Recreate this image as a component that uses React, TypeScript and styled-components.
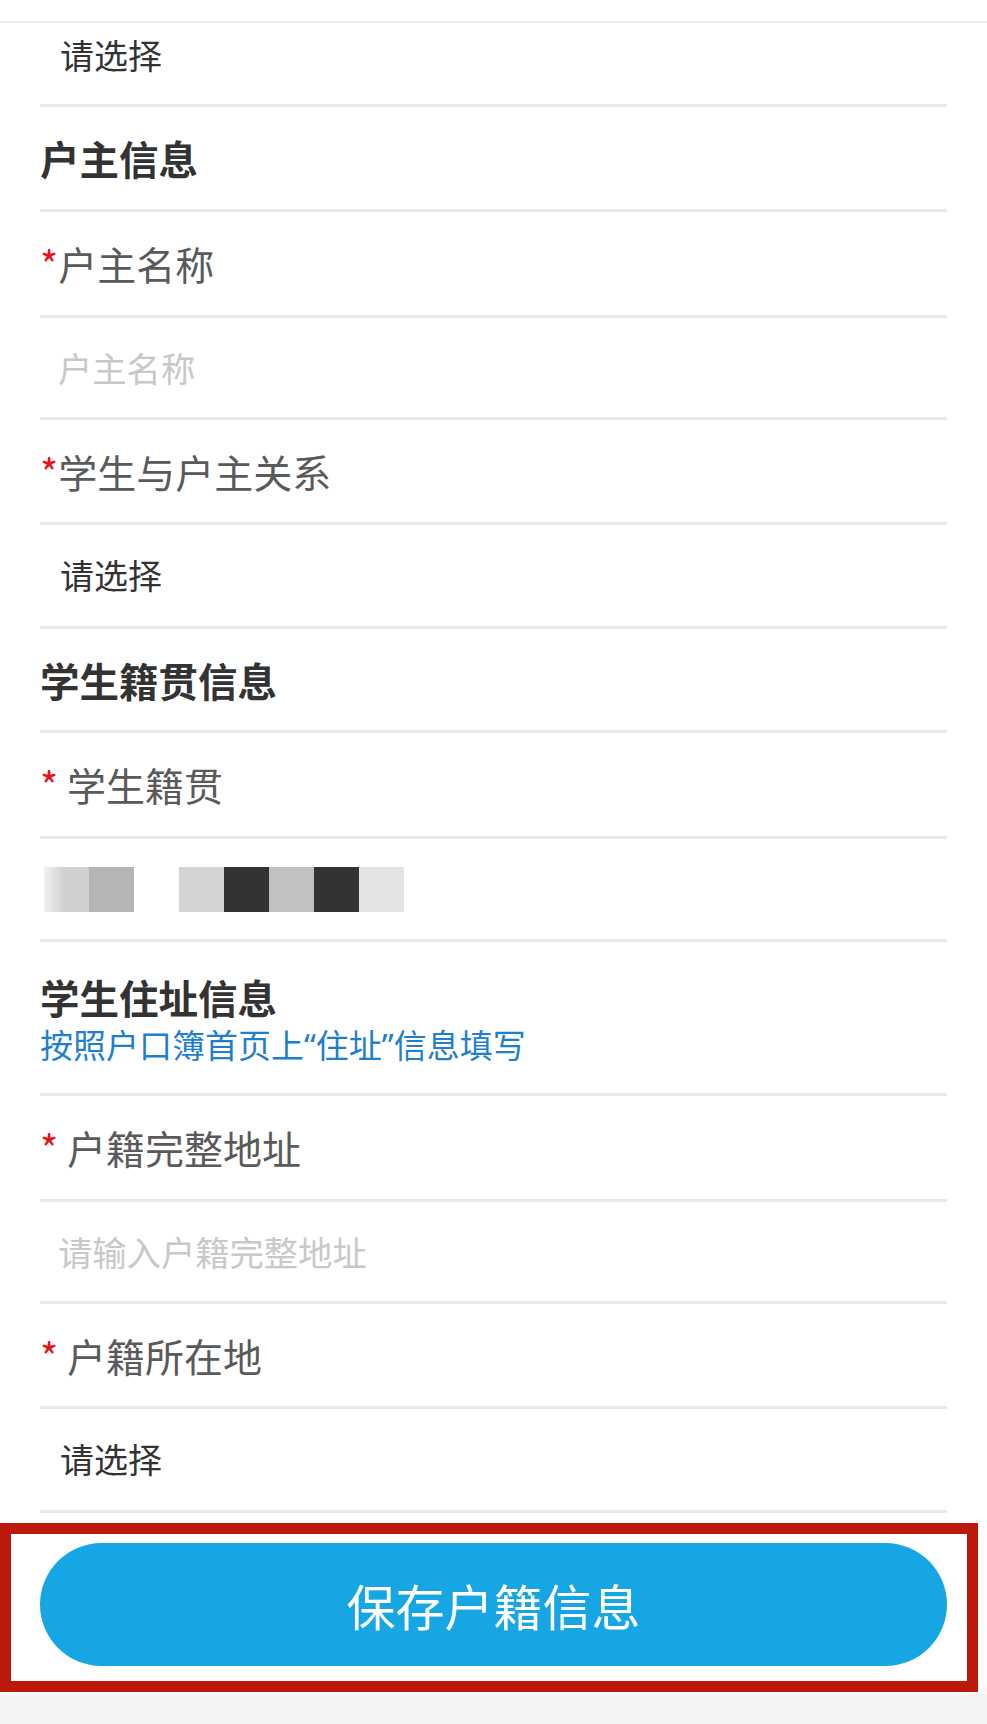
import React from "react";
import styled, { createGlobalStyle } from "styled-components";

const GlobalStyle = createGlobalStyle`
  * {
    box-sizing: border-box;
  }
  html,
  body {
    margin: 0;
    padding: 0;
  }
  body {
    background: #f4f4f4;
    font-family: "Noto Sans CJK SC", "Noto Sans", sans-serif;
  }
`;

const Page = styled.div`
  width: 987px;
  background: #fff;
  padding-bottom: 2px;
`;

const TopBar = styled.div`
  height: 23px;
  background: #fff;
  border-bottom: 2px solid #ededed;
`;

const Form = styled.div`
  padding: 0 40px;
`;

const Row = styled.div<{ $h: number; $pb?: number }>`
  height: ${(p) => p.$h}px;
  padding-bottom: ${(p) => p.$pb || 0}px;
  border-bottom: 3px solid #e8e8e8;
  display: flex;
  flex-direction: column;
  justify-content: center;
`;

const Heading = styled.div<{ $tight?: boolean }>`
  font-size: 39.5px;
  font-weight: 700;
  color: #333;
  line-height: ${(p) => (p.$tight ? "normal" : 1.3)};
`;

// latin first so the quote marks stay narrow like the original
const Hint = styled.div`
  font-family: "Noto Sans", "Noto Sans CJK SC", sans-serif;
  font-size: 33px;
  color: #1f7fcf;
  line-height: normal;
  margin-top: -5px;
`;

const Label = styled.div`
  font-size: 39px;
  color: #5a5a5a;
  line-height: 1.3;
`;

const Star = styled.span`
  color: #e3151a;
`;

const Value = styled.div`
  padding-left: 20px;
  font-size: 34px;
  color: #333;
  line-height: 1.3;
`;

const TextInput = styled.input`
  width: 100%;
  border: none;
  outline: none;
  background: transparent;
  padding: 0 20px 0 18px;
  font-family: inherit;
  font-size: 34.3px;
  line-height: 1.3;
  color: #333;

  &::placeholder {
    color: #c8c8c8;
  }
`;

const Mosaic = styled.div`
  display: flex;
  height: 45px;
  padding-left: 4px;
`;

const Cell = styled.div<{ $c: string; $fade?: boolean }>`
  width: 45px;
  height: 45px;
  background: ${(p) =>
    p.$fade ? `linear-gradient(90deg, #f2f2f2 0%, ${p.$c} 45%)` : p.$c};
`;

const Footer = styled.div`
  margin-top: 10px;
  width: 978px;
  height: 169px;
  border: 11px solid #bc190d;
  padding: 9px 20px 15px 29px;
  background: #fff;
`;

const SaveButton = styled.button`
  width: 100%;
  height: 123px;
  border: none;
  border-radius: 62px;
  background: #16a6e4;
  color: #fff;
  font-family: inherit;
  font-size: 49px;
  cursor: pointer;
`;

const cells = [
  { c: "#d0d0d0", fade: true },
  { c: "#b5b5b5" },
  { c: "#fff" },
  { c: "#d3d3d3" },
  { c: "#333" },
  { c: "#c1c1c1" },
  { c: "#333" },
  { c: "#e4e4e4" },
];

const App = () => {
  return (
    <Page>
      <GlobalStyle />
      <TopBar />
      <Form>
        <Row $h={84} $pb={17}>
          <Value>请选择</Value>
        </Row>
        <Row $h={105}>
          <Heading>户主信息</Heading>
        </Row>
        <Row $h={106}>
          <Label>
            <Star>*</Star>户主名称
          </Label>
        </Row>
        <Row $h={102}>
          <TextInput placeholder="户主名称" />
        </Row>
        <Row $h={105}>
          <Label>
            <Star>*</Star>学生与户主关系
          </Label>
        </Row>
        <Row $h={104}>
          <Value>请选择</Value>
        </Row>
        <Row $h={104}>
          <Heading>学生籍贯信息</Heading>
        </Row>
        <Row $h={106}>
          <Label>
            <Star>*</Star> 学生籍贯
          </Label>
        </Row>
        <Row $h={103}>
          <Mosaic>
            {cells.map((cell, i) => (
              <Cell key={i} $c={cell.c} $fade={cell.fade} />
            ))}
          </Mosaic>
        </Row>
        <Row $h={154}>
          <Heading $tight>学生住址信息</Heading>
          <Hint>按照户口簿首页上“住址”信息填写</Hint>
        </Row>
        <Row $h={106}>
          <Label>
            <Star>*</Star> 户籍完整地址
          </Label>
        </Row>
        <Row $h={102}>
          <TextInput placeholder="请输入户籍完整地址" />
        </Row>
        <Row $h={105}>
          <Label>
            <Star>*</Star> 户籍所在地
          </Label>
        </Row>
        <Row $h={104}>
          <Value>请选择</Value>
        </Row>
      </Form>
      <Footer>
        <SaveButton>保存户籍信息</SaveButton>
      </Footer>
    </Page>
  );
};

export default App;
